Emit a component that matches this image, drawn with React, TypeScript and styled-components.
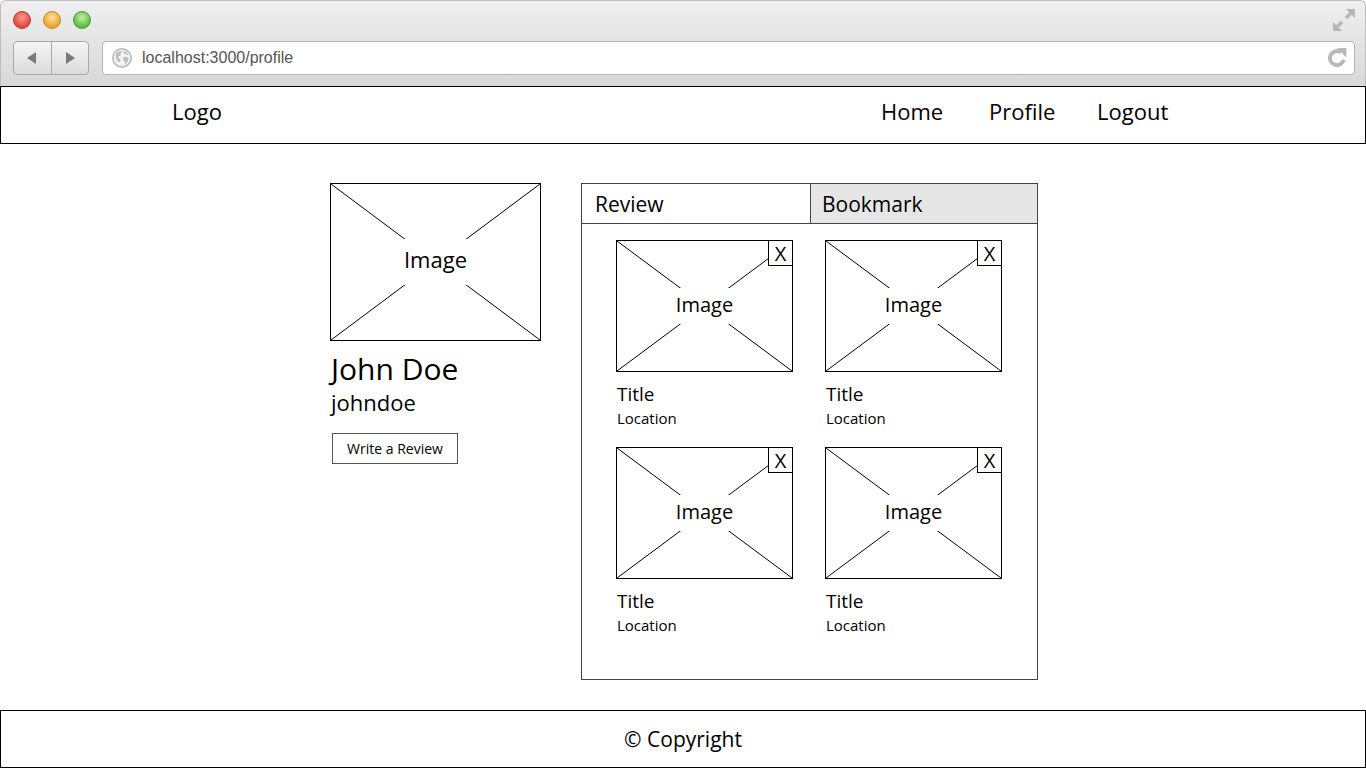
import React from 'react';
import styled, { createGlobalStyle } from 'styled-components';

const GlobalStyle = createGlobalStyle`
  html, body {
    margin: 0;
    padding: 0;
    background: #ffffff;
  }
  body {
    font-family: 'Open Sans', 'Noto Sans', sans-serif;
    color: #000000;
  }
  * {
    box-sizing: border-box;
  }
`;

const Page = styled.div`
  width: 1366px;
  height: 768px;
  display: flex;
  flex-direction: column;
  overflow: hidden;
  background: #ffffff;
`;

/* ---------- browser chrome ---------- */

const Chrome = styled.div`
  flex: none;
  height: 86px;
  padding: 10px 10px 0 12px;
  display: flex;
  flex-direction: column;
  gap: 12px;
  background: linear-gradient(#efefef, #d8d8d8);
  border: 1px solid #bdbdbd;
  border-bottom: none;
  border-radius: 6px 6px 0 0;
`;

const TitleRow = styled.div`
  height: 18px;
  display: flex;
  align-items: center;
  justify-content: space-between;
`;

const Lights = styled.div`
  display: flex;
  gap: 12px;
`;

const lightColors = {
  red: ['#ff9c92', '#e2463c', '#b93a30'],
  yellow: ['#ffe2a0', '#e9a42c', '#c48a25'],
  green: ['#c4f0a6', '#5cbc45', '#4b993a'],
};

const Light = styled.span<{ $tone: keyof typeof lightColors }>`
  width: 18px;
  height: 18px;
  border-radius: 50%;
  background: radial-gradient(
    circle at 50% 35%,
    ${({ $tone }) => lightColors[$tone][0]} 0%,
    ${({ $tone }) => lightColors[$tone][1]} 70%
  );
  border: 1px solid ${({ $tone }) => lightColors[$tone][2]};
`;

const ToolbarRow = styled.div`
  height: 34px;
  display: flex;
  gap: 13px;
`;

const NavButtons = styled.div`
  width: 76px;
  display: flex;
  border: 1px solid #a9a9a9;
  border-radius: 4px;
  background: linear-gradient(#f4f4f4, #dcdcdc);
  overflow: hidden;
`;

const NavButton = styled.div`
  flex: 1;
  display: flex;
  align-items: center;
  justify-content: center;

  & + & {
    border-left: 1px solid #a9a9a9;
  }
`;

const AddressBar = styled.div`
  flex: 1;
  display: flex;
  align-items: center;
  padding: 0 6px 0 8px;
  background: #ffffff;
  border: 1px solid #b3b3b3;
  border-radius: 4px;
`;

const Url = styled.span`
  margin-left: 9px;
  font-family: 'Liberation Sans', Arial, sans-serif;
  font-size: 16px;
  color: #555555;
`;

const Reload = styled.svg`
  margin-left: auto;
`;

/* ---------- site header ---------- */

const TopNav = styled.nav`
  flex: none;
  height: 58px;
  display: flex;
  align-items: center;
  border: 1px solid #000000;
  padding-bottom: 9px;
`;

const NavInner = styled.div`
  width: 1024px;
  margin: 0 auto;
  display: flex;
  align-items: center;
  justify-content: space-between;
`;

const Logo = styled.span`
  padding-left: 1px;
  font-size: 22px;
`;

const Links = styled.div`
  display: flex;
`;

const NavLink = styled.a`
  width: 108px;
  font-size: 22px;
  color: #000000;
  text-decoration: none;

  &:last-child {
    width: 98px;
  }
`;

/* ---------- content ---------- */

const Main = styled.main`
  flex: 1;
  display: flex;
  justify-content: center;
  align-items: flex-start;
  gap: 40px;
  padding: 39px 0 0 2px;
`;

const ProfileColumn = styled.section`
  width: 211px;
  display: flex;
  flex-direction: column;
  align-items: flex-start;
`;

const Frame = styled.div<{ $w: number; $h: number }>`
  position: relative;
  width: ${({ $w }) => $w}px;
  height: ${({ $h }) => $h}px;
  display: grid;
  place-items: center;
  background: #ffffff;
  border: 1px solid #000000;
`;

const Cross = styled.svg`
  position: absolute;
  inset: 0;
  width: 100%;
  height: 100%;
`;

const FrameLabel = styled.span<{ $size: number; $pad: number; $lift: number }>`
  position: relative;
  font-size: ${({ $size }) => $size}px;
  line-height: ${({ $size }) => $size + 4}px;
  padding: ${({ $pad, $lift }) => `${$pad - $lift}px 0 ${$pad + $lift}px`};
  background: #ffffff;
`;

const RemoveBox = styled.span`
  position: absolute;
  top: -1px;
  right: -1px;
  width: 25px;
  height: 26px;
  display: flex;
  align-items: center;
  justify-content: center;
  font-size: 20px;
  background: #ffffff;
  border: 1px solid #000000;
`;

const Name = styled.h1`
  margin: 11px 0 0 1px;
  font-size: 30px;
  line-height: 34px;
  font-weight: 400;
`;

const Username = styled.div`
  margin: 3px 0 0 1px;
  font-size: 22px;
  line-height: 26px;
`;

const WriteButton = styled.button`
  margin: 18px 0 0 2px;
  width: 126px;
  height: 31px;
  padding: 0;
  font-family: inherit;
  font-size: 14px;
  color: #000000;
  background: #ffffff;
  border: 1px solid #555555;
`;

const Panel = styled.section`
  width: 457px;
  height: 497px;
  border: 1px solid #444444;
`;

const Tabs = styled.div`
  display: grid;
  grid-template-columns: 228px 1fr;
  height: 40px;
  border-bottom: 1px solid #444444;
`;

const Tab = styled.div<{ $muted?: boolean }>`
  display: flex;
  align-items: center;
  padding-left: ${({ $muted }) => ($muted ? 11 : 13)}px;
  font-size: 21px;
  background: ${({ $muted }) => ($muted ? '#e6e6e6' : '#ffffff')};

  & + & {
    border-left: 1px solid #444444;
  }
`;

const CardGrid = styled.div`
  display: grid;
  grid-template-columns: 177px 177px;
  column-gap: 32px;
  row-gap: 20px;
  padding: 16px 0 0 34px;
`;

const Card = styled.article`
  display: flex;
  flex-direction: column;
`;

const CardTitle = styled.div`
  margin-top: 11px;
  padding-left: 1px;
  font-size: 19px;
  line-height: 23px;
`;

const CardLocation = styled.div`
  margin-top: 3px;
  padding-left: 1px;
  font-size: 15px;
  line-height: 18px;
`;

const Footer = styled.footer`
  flex: none;
  height: 58px;
  display: flex;
  align-items: center;
  justify-content: center;
  font-size: 21px;
  border: 1px solid #000000;
`;

/* ---------- pieces ---------- */

const Placeholder: React.FC<{
  w: number;
  h: number;
  size: number;
  pad: number;
  lift?: number;
  removable?: boolean;
}> = ({ w, h, size, pad, lift = 0, removable }) => (
  <Frame $w={w} $h={h}>
    <Cross viewBox="0 0 100 100" preserveAspectRatio="none">
      <line x1="0" y1="0" x2="100" y2="100" stroke="#000" strokeWidth="1" vectorEffect="non-scaling-stroke" />
      <line x1="100" y1="0" x2="0" y2="100" stroke="#000" strokeWidth="1" vectorEffect="non-scaling-stroke" />
    </Cross>
    <FrameLabel $size={size} $pad={pad} $lift={lift}>Image</FrameLabel>
    {removable && <RemoveBox>X</RemoveBox>}
  </Frame>
);

const Globe = () => (
  <svg width="22" height="22" viewBox="0 0 22 22">
    <circle cx="11" cy="11" r="10" fill="#bdbdbd" />
    <circle cx="11" cy="11" r="8.3" fill="#f2f2f2" />
    <path
      d="M5 6.5c1.5-1.6 3.4-2.5 5.4-2.6l.6 1.6-1.7 1.2.4 1.6-1.9.9-.2 1.9 1.8 1.4-.4 2.2-1.7.2-1.6-2.2-.9-2.8z"
      fill="#bdbdbd"
    />
    <path
      d="M12.8 4.1c2 .4 3.7 1.7 4.6 3.5l-1.7.2-1.2-1.3-1.6.6zM12.3 10.3l2.5-.6 2.6 1.4-.3 2.8-1.8 2.6-1.5.9.2-2.6-1.6-1.8z"
      fill="#bdbdbd"
    />
  </svg>
);

const items = [1, 2, 3, 4];

export default function App() {
  return (
    <Page>
      <GlobalStyle />
      <Chrome>
        <TitleRow>
          <Lights>
            <Light $tone="red" />
            <Light $tone="yellow" />
            <Light $tone="green" />
          </Lights>
          <svg width="22" height="22" viewBox="0 0 22 22">
            <polygon points="22,0 22,9 13,0" fill="#b6b6b6" />
            <line x1="18.5" y1="3.5" x2="13" y2="9" stroke="#b6b6b6" strokeWidth="3.2" />
            <polygon points="0,22 0,13 9,22" fill="#b6b6b6" />
            <line x1="3.5" y1="18.5" x2="9" y2="13" stroke="#b6b6b6" strokeWidth="3.2" />
          </svg>
        </TitleRow>
        <ToolbarRow>
          <NavButtons>
            <NavButton>
              <svg width="10" height="12" viewBox="0 0 10 12">
                <polygon points="9,0 9,12 0,6" fill="#7a7a7a" />
              </svg>
            </NavButton>
            <NavButton>
              <svg width="10" height="12" viewBox="0 0 10 12">
                <polygon points="1,0 1,12 10,6" fill="#7a7a7a" />
              </svg>
            </NavButton>
          </NavButtons>
          <AddressBar>
            <Globe />
            <Url>localhost:3000/profile</Url>
            <Reload width="22" height="22" viewBox="0 0 20 20">
              <path d="M16.2 11.5A6.4 6.4 0 1 1 13.6 4.8" fill="none" stroke="#b8b8b8" strokeWidth="3.6" />
              <polygon points="10,1 18.5,1 18.5,9.5" fill="#b8b8b8" />
            </Reload>
          </AddressBar>
        </ToolbarRow>
      </Chrome>

      <TopNav>
        <NavInner>
          <Logo>Logo</Logo>
          <Links>
            <NavLink href="#">Home</NavLink>
            <NavLink href="#">Profile</NavLink>
            <NavLink href="#">Logout</NavLink>
          </Links>
        </NavInner>
      </TopNav>

      <Main>
        <ProfileColumn>
          <Placeholder w={211} h={158} size={22} pad={10} lift={3} />
          <Name>John Doe</Name>
          <Username>johndoe</Username>
          <WriteButton>Write a Review</WriteButton>
        </ProfileColumn>

        <Panel>
          <Tabs>
            <Tab>Review</Tab>
            <Tab $muted>Bookmark</Tab>
          </Tabs>
          <CardGrid>
            {items.map((n) => (
              <Card key={n}>
                <Placeholder w={177} h={132} size={20} pad={6} lift={1} removable />
                <CardTitle>Title</CardTitle>
                <CardLocation>Location</CardLocation>
              </Card>
            ))}
          </CardGrid>
        </Panel>
      </Main>

      <Footer>© Copyright</Footer>
    </Page>
  );
}
